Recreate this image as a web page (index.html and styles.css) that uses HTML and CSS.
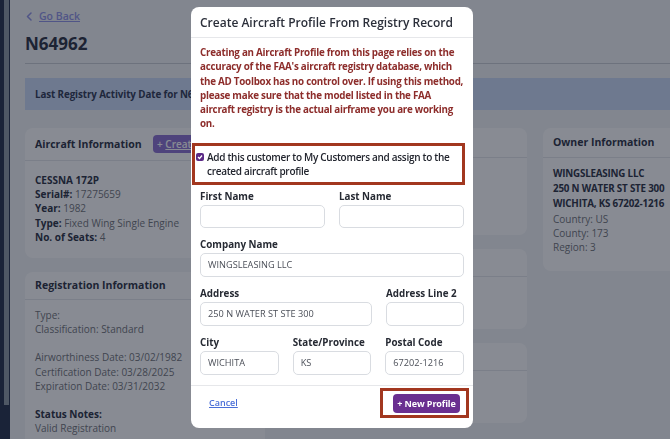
FILE: index.html
```html
<!DOCTYPE html>
<html lang="en">
<head>
    <meta charset="UTF-8">
    <meta name="viewport" content="width=device-width, initial-scale=1.0">
    <title>N64962 - Registry Record</title>
    <link rel="stylesheet" href="styles.css">
</head>
<body>
    <div class="app">
        <aside class="sidebar">
            <div class="scroll-thumb"></div>
        </aside>

        <main class="page">
            <a class="back-link" href="#">
                <svg width="6" height="9" viewBox="0 0 6 9"><path d="M5 1 L1.5 4.5 L5 8" fill="none" stroke="currentColor" stroke-width="1.5" stroke-linecap="round" stroke-linejoin="round"/></svg>
                <span>Go Back</span>
            </a>
            <h1 class="tail-number">N64962</h1>
            <hr class="page-rule">

            <div class="banner">Last Registry Activity Date for N64962: 03/28/2025</div>

            <div class="columns">
                <div class="column">
                    <div class="card">
                        <div class="card-header">
                            <span>Aircraft Information</span>
                            <button type="button" class="btn-small">+ <u>Create</u> Profile</button>
                        </div>
                        <div class="card-body aircraft-body">
                            <p><strong>CESSNA 172P</strong></p>
                            <p><strong>Serial#:</strong> 17275659</p>
                            <p><strong>Year:</strong> 1982</p>
                            <p><strong>Type:</strong> Fixed Wing Single Engine</p>
                            <p><strong>No. of Seats:</strong> 4</p>
                        </div>
                    </div>

                    <div class="card">
                        <div class="card-header short">
                            <span>Registration Information</span>
                        </div>
                        <div class="card-body registration-body">
                            <div class="group">
                                <p>Type:</p>
                                <p>Classification: Standard</p>
                            </div>
                            <div class="group">
                                <p>Airworthiness Date: 03/02/1982</p>
                                <p>Certification Date: 03/28/2025</p>
                                <p>Expiration Date: 03/31/2032</p>
                            </div>
                            <div class="group">
                                <p><strong>Status Notes:</strong></p>
                                <p>Valid Registration</p>
                            </div>
                        </div>
                    </div>
                </div>

                <div class="column">
                    <div class="card">
                        <div class="card-header"></div>
                        <div class="card-body placeholder-tall"></div>
                    </div>
                    <div class="card">
                        <div class="card-header short"></div>
                        <div class="card-body placeholder"></div>
                    </div>
                    <div class="card">
                        <div class="card-header short"></div>
                        <div class="card-body placeholder"></div>
                    </div>
                </div>

                <div class="column">
                    <div class="card">
                        <div class="card-header">
                            <span>Owner Information</span>
                        </div>
                        <div class="card-body owner-body">
                            <p><strong>WINGSLEASING LLC</strong></p>
                            <p><strong>250 N WATER ST STE 300</strong></p>
                            <p><strong>WICHITA, KS 67202-1216</strong></p>
                            <p>Country: US</p>
                            <p>County: 173</p>
                            <p>Region: 3</p>
                        </div>
                    </div>
                </div>
            </div>
        </main>
    </div>

    <div class="overlay"></div>

    <div class="modal">
        <div class="modal-header">Create Aircraft Profile From Registry Record</div>
        <div class="modal-body">
            <p class="warning">Creating an Aircraft Profile from this page relies on the accuracy of the FAA's aircraft registry database, which the AD Toolbox has no control over. If using this method, please make sure that the model listed in the FAA aircraft registry is the actual airframe you are working on.</p>

            <label class="customer-check">
                <span class="checkbox">
                    <svg width="6" height="6" viewBox="0 0 6 6"><path d="M1 3 L2.5 4.5 L5 1.5" fill="none" stroke="#fff" stroke-width="1.2"/></svg>
                </span>
                <span>Add this customer to My Customers and assign to the created aircraft profile</span>
            </label>

            <div class="form-row two">
                <div class="field">
                    <label>First Name</label>
                    <input type="text" value="">
                </div>
                <div class="field">
                    <label>Last Name</label>
                    <input type="text" value="">
                </div>
            </div>

            <div class="form-row">
                <div class="field">
                    <label>Company Name</label>
                    <input type="text" value="WINGSLEASING LLC" class="tall">
                </div>
            </div>

            <div class="form-row address">
                <div class="field">
                    <label>Address</label>
                    <input type="text" value="250 N WATER ST STE 300" class="tall">
                </div>
                <div class="field">
                    <label>Address Line 2</label>
                    <input type="text" value="" class="tall">
                </div>
            </div>

            <div class="form-row three">
                <div class="field">
                    <label>City</label>
                    <input type="text" value="WICHITA" class="tall">
                </div>
                <div class="field">
                    <label>State/Province</label>
                    <input type="text" value="KS" class="tall">
                </div>
                <div class="field">
                    <label>Postal Code</label>
                    <input type="text" value="67202-1216" class="tall">
                </div>
            </div>
        </div>
        <div class="modal-footer">
            <a href="#" class="cancel-link">Cancel</a>
            <div class="highlight-box">
                <button type="button" class="btn-primary">+ New Profile</button>
            </div>
        </div>
    </div>
</body>
</html>
```

FILE: styles.css
```css
body {
    margin: 0;
    font-family: "Open Sans", "DejaVu Sans", sans-serif;
    font-size: 10px;
    background-color: #f3f4f6;
    color: #292e3f;
    overflow: hidden;
    height: 439px;
}

p {
    margin: 0;
}

.app {
    display: flex;
    height: 100vh;
}

.sidebar {
    width: 7px;
    flex-shrink: 0;
    border-left: 3px solid #232e49;
    background-color: #232e49;
}

.scroll-thumb {
    margin-left: 1px;
    width: 5px;
    height: 405px;
    background-color: #8d98a3;
}

.page {
    padding: 9px 0 0 15px;
    width: 700px;
    flex-shrink: 0;
}

.back-link {
    display: flex;
    align-items: center;
    gap: 7px;
    height: 14px;
    margin-left: 1px;
    color: #8f93e6;
    font-size: 10.5px;
    font-weight: 600;
}

.back-link span {
    text-decoration: underline;
}

.tail-number {
    margin: 10px 0 0;
    font-size: 17px;
    line-height: 22px;
    font-weight: 700;
    color: #292e3f;
}

.page-rule {
    margin: 8px 0 0;
    border: none;
    border-top: 1px solid #c9ccd3;
}

.banner {
    margin-top: 14px;
    height: 32px;
    padding-left: 10px;
    display: flex;
    align-items: center;
    background-color: #cbdaf7;
    font-size: 9.8px;
    font-weight: 700;
    letter-spacing: -0.1px;
    color: #2d3650;
}

.columns {
    margin-top: 18px;
    display: grid;
    grid-template-columns: 240px 246px 180px;
    gap: 16px;
    align-items: start;
}

.column {
    display: flex;
    flex-direction: column;
    gap: 14px;
}

.card {
    background-color: #fff;
    border-radius: 8px;
    font-size: 10px;
    line-height: 14.2px;
    color: #6f7277;
}

.card strong {
    color: #292e3f;
    font-weight: 700;
}

.card-header {
    min-height: 15px;
    padding: 7px 10px;
    display: flex;
    align-items: center;
    justify-content: space-between;
    border-bottom: 1px solid #e5e7eb;
    font-size: 10.5px;
    line-height: 15px;
    font-weight: 700;
    color: #292e3f;
}

.card-header.short {
    padding: 6px 10px;
}

.btn-small {
    width: 102px;
    height: 18px;
    padding: 0 4px;
    text-align: left;
    border: none;
    border-radius: 4px;
    background-color: #8a6fd0;
    color: #fff;
    font-family: inherit;
    font-size: 10px;
    font-weight: 600;
}

.card-body {
    padding: 12px 10px 14px;
}

.owner-body {
    padding-top: 8px;
    padding-bottom: 17px;
}

.owner-body strong {
    font-size: 9.8px;
    letter-spacing: -0.2px;
}

.registration-body {
    padding-top: 8px;
    display: flex;
    flex-direction: column;
    gap: 14px;
}

.placeholder-tall {
    height: 51px;
}

.placeholder {
    height: 26px;
}

.overlay {
    position: fixed;
    inset: 0;
    background-color: rgba(17, 24, 39, 0.5);
}

.modal {
    position: fixed;
    left: 191px;
    top: 7px;
    width: 282px;
    background-color: #fff;
    border-radius: 8px;
    overflow: hidden;
}

.modal-header {
    height: 30px;
    padding: 0 9px;
    display: flex;
    align-items: center;
    border-bottom: 1px solid #e6e7ea;
    font-size: 12px;
    font-weight: 600;
    color: #2b2f3a;
}

.modal-body {
    padding: 8px 9px 10px;
}

.warning {
    font-size: 9.8px;
    line-height: 14.3px;
    font-weight: 700;
    letter-spacing: -0.25px;
    color: #8d2d2b;
}

.customer-check {
    margin: 11px -1px 0 -8px;
    padding: 4px 4px 4px 1px;
    display: flex;
    align-items: flex-start;
    gap: 3px;
    border: 3px solid #a2371f;
    font-size: 10px;
    line-height: 14px;
    font-weight: 600;
    letter-spacing: -0.3px;
    color: #22252e;
}

.checkbox {
    margin-top: 3px;
    width: 8px;
    height: 8px;
    flex-shrink: 0;
    border-radius: 2px;
    background-color: #5b2a86;
    display: flex;
    align-items: center;
    justify-content: center;
}

.form-row {
    margin-top: 10px;
    display: grid;
    gap: 14px;
}

.form-row.two {
    margin-top: 5px;
    grid-template-columns: 1fr 1fr;
}

.form-row.address {
    grid-template-columns: 1fr 78px;
}

.form-row.three {
    grid-template-columns: 1fr 1fr 1fr;
}

.field label {
    display: block;
    font-size: 9.8px;
    line-height: 14px;
    font-weight: 700;
    color: #262a33;
    margin-bottom: 1px;
}

.field input {
    display: block;
    box-sizing: border-box;
    width: 100%;
    height: 23px;
    margin: 0;
    padding: 0 7px;
    border: 1px solid #d9dce1;
    border-radius: 5px;
    font-family: inherit;
    font-size: 9.2px;
    color: #4b4f58;
}

.field input.tall {
    height: 24px;
}

.modal-footer {
    height: 34px;
    padding: 0 4px 8px 18px;
    display: flex;
    align-items: center;
    justify-content: space-between;
    border-top: 1px solid #e6e7ea;
}

.cancel-link {
    color: #4a6fd8;
    font-size: 9px;
    font-weight: 600;
}

.highlight-box {
    padding: 3px 6px 2px 10px;
    border: 3px solid #a2371f;
}

.btn-primary {
    display: block;
    height: 19px;
    width: 67px;
    padding: 0;
    border: none;
    border-radius: 4px;
    background-color: #6a2f90;
    color: #fff;
    font-family: inherit;
    font-size: 9px;
    font-weight: 700;
    letter-spacing: -0.1px;
}
```
